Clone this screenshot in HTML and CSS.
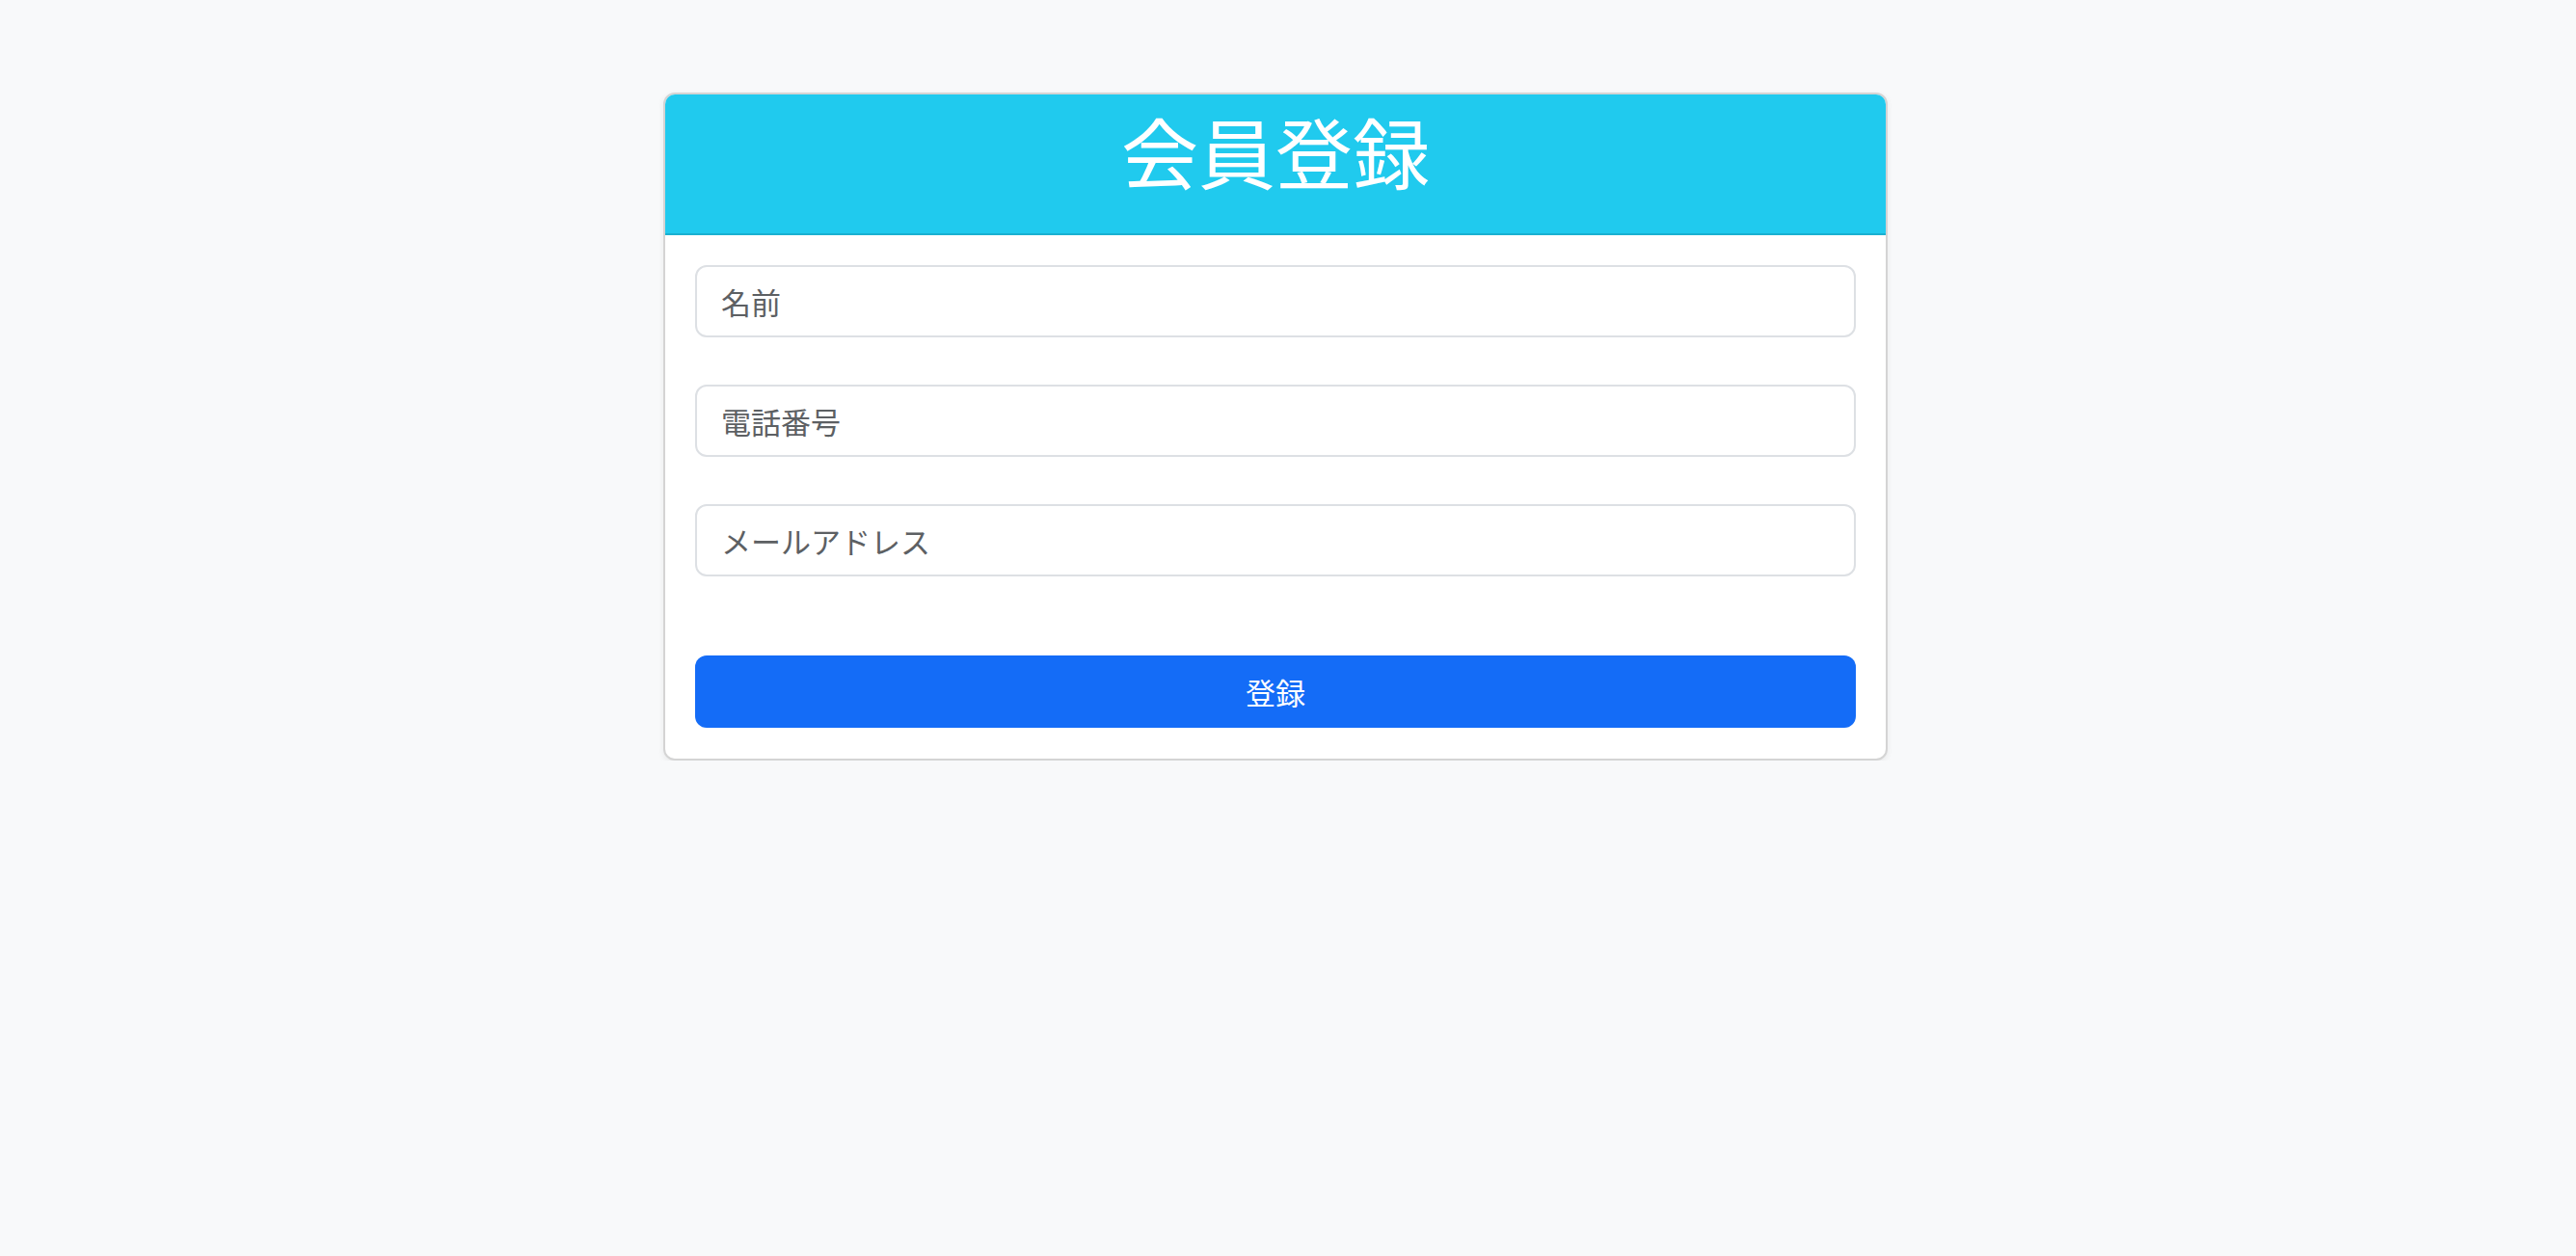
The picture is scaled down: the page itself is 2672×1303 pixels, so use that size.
FILE: index.html
```html
<!DOCTYPE html>
<html lang="ja">
<head>
<meta charset="utf-8">
<title>会員登録</title>
<link rel="stylesheet" href="styles.css">
</head>
<body>
<main class="page">
  <section class="card">
    <header class="card-header">
      <h1 class="title">会員登録</h1>
    </header>
    <form class="card-body">
      <input class="field" type="text" placeholder="名前">
      <input class="field" type="text" placeholder="電話番号">
      <input class="field" type="text" placeholder="メールアドレス">
      <button class="submit" type="button">登録</button>
    </form>
  </section>
</main>
</body>
</html>
```
FILE: styles.css
```css
* { box-sizing: border-box; }
html, body {
  margin: 0;
  padding: 0;
  background: #f8f9fa;
  font-family: "Noto Sans CJK JP", "Noto Sans", sans-serif;
}
.page {
  padding-top: 96px;
  padding-left: 688px;
}
.card {
  width: 1270px;
  background: #fff;
  border: 2px solid #d4d4d4;
  border-radius: 12px;
  box-shadow: 0 2px 6px rgba(0,0,0,0.07);
  overflow: hidden;
}
.card-header {
  background: #20caee;
  border-bottom: 2px solid #1ab0d1;
  padding: 9px 32px 39px;
  text-align: center;
}
.title {
  margin: 0;
  font-size: 80px;
  line-height: 1.2;
  font-weight: 400;
  color: #fff;
}
.card-body {
  display: flex;
  flex-direction: column;
  padding: 31px 31px 32px;
}
.field {
  height: 75px;
  margin: 0 0 49px;
  padding: 0 25px;
  border: 2px solid #dde0e4;
  border-radius: 12px;
  background: #fff;
  font-family: inherit;
  font-size: 31px;
  color: #212529;
  outline: none;
}
.field:last-of-type { margin-bottom: 82px; }
.field::placeholder { color: #5d6063; opacity: 1; }
.submit {
  height: 75px;
  border: none;
  border-radius: 12px;
  background: #146cf7;
  color: #fff;
  font-family: inherit;
  font-size: 31px;
  cursor: pointer;
}
```
